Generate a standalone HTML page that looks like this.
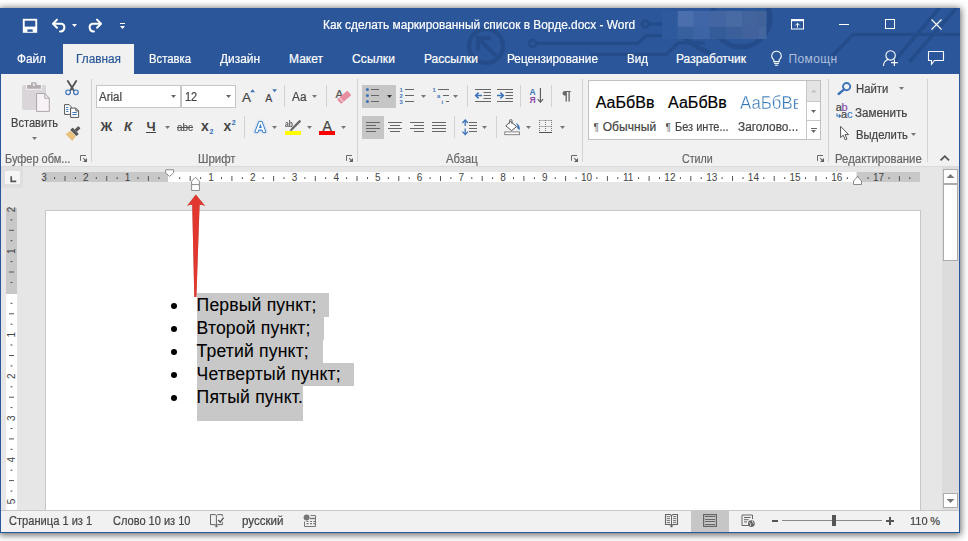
<!DOCTYPE html>
<html lang="ru"><head><meta charset="utf-8"><title>Word</title>
<style>
html,body{margin:0;padding:0;background:#fff;}
body{width:968px;height:541px;overflow:hidden;position:relative;font-family:"Liberation Sans",sans-serif;}
.b{position:absolute;display:block;}
.t{position:absolute;white-space:nowrap;line-height:20px;font-family:"Liberation Sans",sans-serif;-webkit-text-stroke:0.2px currentColor;}
</style></head><body>
<div class="b" style="left:0;top:8px;width:960px;height:525px;background:#2b579a;box-shadow:0 1px 7px 1px rgba(0,0,0,.6);"></div>
<div class="b" style="left:0px;top:8px;width:960px;height:66px;background:#2b579a;"></div>
<div class="b" style="left:1px;top:74px;width:958px;height:92px;background:#f1f1f1;"></div>
<div class="b" style="left:1px;top:166px;width:958px;height:1px;background:#dadada;"></div>
<div class="b" style="left:1px;top:167px;width:958px;height:344px;background:#e6e6e6;"></div>
<div class="b" style="left:1px;top:511px;width:958px;height:20.5px;background:#f1f1f1;"></div>
<div class="b" style="left:1px;top:510px;width:958px;height:1px;background:#c8c8c8;"></div>
<div class="b" style="left:63px;top:44px;width:71px;height:31px;background:#f1f1f1;"></div>
<svg class="b" style="left:0px;top:8px;" width="960" height="66" viewBox="0 8 960 66">
<g fill="none" stroke="#254c8a" stroke-width="3.5" stroke-linecap="butt">
 <circle cx="486" cy="46" r="17" stroke-width="4.5"/>
 <path d="M496 56 L479 39 M478 51 V38 H491" stroke-width="4.5"/>
 <circle cx="532.7" cy="43.3" r="3.4" stroke-width="2.8"/>
 <path d="M536.2 43.3 H638 L646 35.5 H678"/>
 <path d="M590 54.5 H666 L678 43 H705"/>
 <circle cx="645.4" cy="24" r="3.4" stroke-width="2.8"/>
 <path d="M649 24 H680"/>
 <circle cx="741" cy="18" r="29" stroke-width="5"/><path d="M676 26 Q686 44 712 54" stroke-width="5"/>
 <path d="M960 34.4 H853 L831 57.5 M939.4 8 L893.6 62 M956.5 8 L909.1 62"/>
</g></svg>
<svg class="b" style="left:660px;top:10px;" width="110" height="30" viewBox="660 10 110 30"><rect x="662" y="11" width="16" height="28" fill="#2e5a9d"/><rect x="677.7" y="11" width="16.3" height="16" fill="#4a6fac"/><rect x="677.7" y="26.8" width="16.3" height="12.2" fill="#37609e"/><rect x="693.8" y="11" width="16.3" height="16" fill="#4166a7"/><rect x="693.8" y="26.8" width="16.3" height="12.2" fill="#3d65a5"/><rect x="709.9" y="11" width="16.3" height="16" fill="#4365a1"/><rect x="709.9" y="26.8" width="16.3" height="12.2" fill="#345c99"/><rect x="726.0" y="11" width="16.3" height="16" fill="#486ba3"/><rect x="726.0" y="26.8" width="16.3" height="12.2" fill="#3a5f9a"/><rect x="742.1" y="11" width="16.3" height="16" fill="#41649d"/><rect x="742.1" y="26.8" width="16.3" height="12.2" fill="#41629c"/><rect x="758.2" y="11" width="8.2" height="16" fill="#41639a"/><rect x="758.2" y="26.8" width="8.2" height="12.2" fill="#4567a0"/></svg>
<svg class="b" style="left:22px;top:18px;" width="16" height="16" viewBox="0 0 16 16"><rect x="0.8" y="0.8" width="14.4" height="14" fill="#fff"/><rect x="2.7" y="2.7" width="10.6" height="5.9" fill="#2b579a"/><rect x="5.4" y="11.4" width="5.3" height="2.4" fill="#2b579a"/></svg>
<svg class="b" style="left:51px;top:17px;" width="17" height="16" viewBox="0 0 17 16"><path d="M2.6 6.8 H10.6 A3.9 3.9 0 0 1 9 14.4" fill="none" stroke="#fff" stroke-width="2" stroke-linecap="round"/><path d="M6 2.6 L2 6.8 L6 10.8" fill="none" stroke="#fff" stroke-width="2" stroke-linecap="round" stroke-linejoin="round"/></svg>
<svg class="b" style="left:71.0px;top:22.8px;" width="7" height="5.0" viewBox="0 0 7 5.0"><path d="M1 1 H6 L3.5 4.0 Z" fill="#fff"/></svg>
<svg class="b" style="left:85.5px;top:17px;" width="17" height="16" viewBox="0 0 17 16"><path d="M14.4 6.8 H6.4 A3.9 3.9 0 0 0 8 14.4" fill="none" stroke="#fff" stroke-width="2" stroke-linecap="round"/><path d="M11 2.6 L15 6.8 L11 10.8" fill="none" stroke="#fff" stroke-width="2" stroke-linecap="round" stroke-linejoin="round"/></svg>
<div class="b" style="left:120px;top:23px;width:5px;height:1.1999999999999993px;background:#fff;"></div>
<svg class="b" style="left:119.0px;top:24.7px;" width="7" height="5.0" viewBox="0 0 7 5.0"><path d="M1 1 H6 L3.5 4.0 Z" fill="#fff"/></svg>
<span class="t " style="left:323.00px;top:15.00px;font-size:12px;color:#fff;transform:scaleX(0.9918);transform-origin:0 50%;">Как сделать маркированный список в Ворде.docx - Word</span>
<svg class="b" style="left:790px;top:18px;" width="15" height="12" viewBox="0 0 15 12"><rect x="1.5" y="1.5" width="12" height="9.5" fill="none" stroke="#fff" stroke-width="1"/><rect x="1" y="1" width="13" height="2.2" fill="#fff"/><path d="M7.5 9.6 V5.4 M5.4 7.3 L7.5 5.2 L9.6 7.3" fill="none" stroke="#fff" stroke-width="1"/></svg>
<div class="b" style="left:839px;top:24px;width:10px;height:1px;background:#fff;"></div>
<div class="b" style="left:885px;top:19px;width:10px;height:10px;border:1px solid #fff;box-sizing:border-box;"></div>
<svg class="b" style="left:931px;top:18.5px;" width="11" height="11" viewBox="0 0 11 11"><path d="M0.5 0.5 L10.5 10.5 M10.5 0.5 L0.5 10.5" stroke="#fff" stroke-width="1.1" fill="none"/></svg>
<span class="t " style="left:17.00px;top:49.00px;font-size:12px;color:#fff;transform:scaleX(0.9830);transform-origin:0 50%;">Файл</span>
<span class="t " style="left:76.00px;top:49.00px;font-size:12px;color:#2b579a;transform:scaleX(0.9853);transform-origin:0 50%;">Главная</span>
<span class="t " style="left:149.00px;top:49.00px;font-size:12px;color:#fff;transform:scaleX(0.9417);transform-origin:0 50%;">Вставка</span>
<span class="t " style="left:220.00px;top:49.00px;font-size:12px;color:#fff;transform:scaleX(0.9917);transform-origin:0 50%;">Дизайн</span>
<span class="t " style="left:289.00px;top:49.00px;font-size:12px;color:#fff;letter-spacing:0.008px;">Макет</span>
<span class="t " style="left:352.00px;top:49.00px;font-size:12px;color:#fff;letter-spacing:0.126px;">Ссылки</span>
<span class="t " style="left:424.00px;top:49.00px;font-size:12px;color:#fff;letter-spacing:0.018px;">Рассылки</span>
<span class="t " style="left:507.00px;top:49.00px;font-size:12px;color:#fff;transform:scaleX(0.9821);transform-origin:0 50%;">Рецензирование</span>
<span class="t " style="left:627.00px;top:49.00px;font-size:12px;color:#fff;transform:scaleX(0.9674);transform-origin:0 50%;">Вид</span>
<span class="t " style="left:676.00px;top:49.00px;font-size:12px;color:#fff;letter-spacing:0.002px;">Разработчик</span>
<span class="t " style="left:788.50px;top:49.00px;font-size:12px;color:#aebfdb;letter-spacing:0.380px;-webkit-text-stroke:0;">Помощн</span>
<svg class="b" style="left:770px;top:50px;" width="13" height="17" viewBox="0 0 13 17"><path d="M6.5 1.2 A4.6 4.6 0 0 1 9.2 9.6 V11.6 H3.8 V9.6 A4.6 4.6 0 0 1 6.5 1.2 Z" fill="none" stroke="#fff" stroke-width="1.1"/><path d="M4 13.4 H9 M4.8 15.2 H8.2" stroke="#fff" stroke-width="1"/></svg>
<svg class="b" style="left:881px;top:49px;" width="18" height="18" viewBox="0 0 18 18"><circle cx="9.6" cy="6.4" r="4.7" fill="none" stroke="#fff" stroke-width="1.1"/><path d="M2.4 17 C2.8 12.6 5.2 11 7.4 10.4" fill="none" stroke="#fff" stroke-width="1.1"/><path d="M13.4 10.4 V17 M10 13.7 H16.8" stroke="#fff" stroke-width="1.2"/></svg>
<svg class="b" style="left:927px;top:50px;" width="18" height="16" viewBox="0 0 18 16"><path d="M1.5 1.5 H16.5 V10.5 H7.5 L4.5 14.2 V10.5 H1.5 Z" fill="none" stroke="#fff" stroke-width="1.1" stroke-linejoin="miter"/></svg>
<svg class="b" style="left:21px;top:81px;" width="30" height="32" viewBox="0 0 30 32">
<rect x="1.1" y="3.9" width="23.9" height="25" rx="1.6" fill="#d9d5d9"/>
<rect x="5" y="3.9" width="16" height="5" fill="#f1f1f1"/>
<path d="M6 7.8 V4.1 H10 V2.2 Q10 1.2 11 1.2 H14.6 Q15.6 1.2 15.6 2.2 V4.1 H19.9 V7.8 Z" fill="#b2aeb2"/>
<rect x="11.9" y="2.6" width="2" height="2.2" fill="#f4f2f4"/>
<path d="M15.6 12.5 H23.8 L28.3 17.2 V30.4 H15.6 Z" fill="#f8f1f6" stroke="#aaa6aa" stroke-width="1" stroke-linejoin="miter"/>
<path d="M23.8 12.5 V17.2 H28.3" fill="none" stroke="#aaa6aa" stroke-width="1"/>
</svg>
<span class="t " style="left:10.70px;top:113.00px;font-size:12px;color:#444;transform:scaleX(0.9240);transform-origin:0 50%;">Вставить</span>
<svg class="b" style="left:30.9px;top:136.1px;" width="7" height="5.0" viewBox="0 0 7 5.0"><path d="M1 1 H6 L3.5 4.0 Z" fill="#777"/></svg>
<svg class="b" style="left:63px;top:79px;" width="18" height="18" viewBox="0 0 18 18">
<path d="M4.8 2 L10.6 11.2 M13.2 2 L7.4 11.2" stroke="#555" stroke-width="1.9" fill="none" stroke-linecap="round"/>
<circle cx="5.1" cy="13.3" r="2.3" fill="none" stroke="#3c74ba" stroke-width="1.2"/>
<circle cx="12.9" cy="13.3" r="2.3" fill="none" stroke="#3c74ba" stroke-width="1.2"/>
</svg>
<svg class="b" style="left:63px;top:103px;" width="18" height="16" viewBox="0 0 18 16">
<path d="M1.6 1.6 H6 L8.2 3.8 V11.4 H1.6 Z" fill="#fff" stroke="#555" stroke-width="1"/>
<path d="M3.2 4.5 H5.4 M3.2 6.5 H5.4 M3.2 8.5 H5.4" stroke="#3c74ba" stroke-width="1"/>
<path d="M7.6 5.1 H12.8 L15.6 7.9 V14.4 H7.6 Z" fill="#fff" stroke="#555" stroke-width="1"/>
<path d="M12.8 5.1 V7.9 H15.6" fill="none" stroke="#555" stroke-width="1"/>
<path d="M9.4 9.5 H13.8 M9.4 11.5 H13.8" stroke="#3c74ba" stroke-width="1"/>
</svg>
<svg class="b" style="left:63.5px;top:124.5px;" width="18" height="17" viewBox="0 0 18 17">
<g transform="rotate(45 9 8.5)">
<rect x="7.4" y="-0.5" width="3.2" height="5.2" rx="0.6" fill="#595959"/>
<rect x="4.6" y="4.6" width="8.8" height="3.4" rx="0.6" fill="#595959"/>
<path d="M5 8.5 H13 L13.8 14.2 H4.2 Z" fill="#e9c07c"/>
</g>
</svg>
<span class="t " style="left:4.60px;top:149.00px;font-size:12px;color:#666;transform:scaleX(0.9139);transform-origin:0 50%;">Буфер обм...</span>
<svg class="b" style="left:80px;top:155px;" width="8" height="8" viewBox="0 0 8 8"><path d="M0.5 5.8 V0.5 H6" fill="none" stroke="#686868" stroke-width="1"/><path d="M3.2 3.2 L5.6 5.6" stroke="#686868" stroke-width="1.1"/><path d="M7 3 V7 H3 Z" fill="#606060"/></svg>
<div class="b" style="left:91px;top:79px;width:1px;height:83px;background:#d2d2d2;"></div>
<div class="b" style="left:96px;top:85px;width:85px;height:23px;background:#fff;border:1px solid #c6c6c6;box-sizing:border-box;"></div>
<div class="b" style="left:181px;top:85px;width:55px;height:23px;background:#fff;border:1px solid #c6c6c6;box-sizing:border-box;"></div>
<span class="t " style="left:99.30px;top:87.00px;font-size:12px;color:#444;transform:scaleX(0.9581);transform-origin:0 50%;">Arial</span>
<svg class="b" style="left:170.2px;top:94.0px;" width="7" height="5.0" viewBox="0 0 7 5.0"><path d="M1 1 H6 L3.5 4.0 Z" fill="#666"/></svg>
<span class="t " style="left:184.80px;top:87.00px;font-size:12px;color:#444;transform:scaleX(0.9141);transform-origin:0 50%;">12</span>
<svg class="b" style="left:224.8px;top:94.0px;" width="7" height="5.0" viewBox="0 0 7 5.0"><path d="M1 1 H6 L3.5 4.0 Z" fill="#666"/></svg>
<span class="t " style="left:100.60px;top:117.00px;font-size:13px;color:#444;font-weight:bold;-webkit-text-stroke:0;">Ж</span>
<span class="t " style="left:124.00px;top:117.00px;font-size:13px;color:#444;font-weight:bold;-webkit-text-stroke:0;font-style:italic;">К</span>
<span class="t " style="left:146.60px;top:117.00px;font-size:13px;color:#444;font-weight:bold;-webkit-text-stroke:0;">Ч</span>
<div class="b" style="left:146px;top:132px;width:10px;height:1px;background:#444;"></div>
<svg class="b" style="left:164.0px;top:124.5px;" width="7" height="5.0" viewBox="0 0 7 5.0"><path d="M1 1 H6 L3.5 4.0 Z" fill="#777"/></svg>
<span class="t " style="left:177.20px;top:117.00px;font-size:11px;color:#555;transform:scaleX(0.9022);transform-origin:0 50%;text-decoration:line-through;">abc</span>
<span class="t " style="left:200.90px;top:116.00px;font-size:14px;color:#444;font-weight:bold;-webkit-text-stroke:0;">x</span>
<span class="t " style="left:209.60px;top:122.00px;font-size:7px;color:#2b6cb8;font-weight:bold;-webkit-text-stroke:0;">2</span>
<span class="t " style="left:223.40px;top:116.00px;font-size:14px;color:#444;font-weight:bold;-webkit-text-stroke:0;">x</span>
<span class="t " style="left:231.70px;top:113.00px;font-size:7px;color:#2b6cb8;font-weight:bold;-webkit-text-stroke:0;">2</span>
<span class="t " style="left:197.90px;top:149.00px;font-size:12px;color:#666;transform:scaleX(0.9498);transform-origin:0 50%;">Шрифт</span>
<svg class="b" style="left:346px;top:155px;" width="8" height="8" viewBox="0 0 8 8"><path d="M0.5 5.8 V0.5 H6" fill="none" stroke="#686868" stroke-width="1"/><path d="M3.2 3.2 L5.6 5.6" stroke="#686868" stroke-width="1.1"/><path d="M7 3 V7 H3 Z" fill="#606060"/></svg>
<div class="b" style="left:357px;top:79px;width:1px;height:83px;background:#d2d2d2;"></div>
<span class="t " style="left:242.00px;top:88.00px;font-size:13.5px;color:#444;">A</span>
<svg class="b" style="left:250px;top:89px;" width="6" height="4" viewBox="0 0 6 4"><path d="M0.2 3.2 L2.6 0.3 L5 3.2 Z" fill="#3c74ba"/></svg>
<span class="t " style="left:265.20px;top:88.00px;font-size:10.5px;color:#444;">A</span>
<svg class="b" style="left:272px;top:89px;" width="6" height="4" viewBox="0 0 6 4"><path d="M0.2 0.3 H5 L2.6 3.2 Z" fill="#3c74ba"/></svg>
<div class="b" style="left:284px;top:85px;width:1px;height:22px;background:#d2d2d2;"></div>
<span class="t " style="left:292.20px;top:87.00px;font-size:12.5px;color:#444;transform:scaleX(0.9462);transform-origin:0 50%;">Аа</span>
<svg class="b" style="left:311.1px;top:94.0px;" width="7" height="5.0" viewBox="0 0 7 5.0"><path d="M1 1 H6 L3.5 4.0 Z" fill="#777"/></svg>
<div class="b" style="left:326px;top:85px;width:1px;height:22px;background:#d2d2d2;"></div>
<span class="t " style="left:335.40px;top:84.00px;font-size:11.5px;color:#555;">A</span>
<svg class="b" style="left:335px;top:88px;" width="17" height="16" viewBox="0 0 17 16"><g transform="rotate(-40 9 9)"><rect x="2.2" y="6.3" width="13.6" height="6" rx="0.8" fill="#e78ea0"/><rect x="4.6" y="6.3" width="1.1" height="6" fill="#f6d3da"/></g></svg>
<div class="b" style="left:244px;top:116px;width:1px;height:22px;background:#d2d2d2;"></div>
<svg class="b" style="left:250px;top:116px;" width="20" height="20" viewBox="250 116 20 20"><text x="254.9" y="131.6" font-size="15" font-weight="bold" font-family="Liberation Sans, sans-serif" fill="#fff" stroke="#2e75c7" stroke-width="1.7" paint-order="stroke" stroke-linejoin="round" style="filter:drop-shadow(0 0 0.8px #8bb8ee);">A</text></svg>
<svg class="b" style="left:271.1px;top:124.9px;" width="7" height="5.0" viewBox="0 0 7 5.0"><path d="M1 1 H6 L3.5 4.0 Z" fill="#777"/></svg>
<span class="t " style="left:284.90px;top:114.00px;font-size:9px;color:#555;font-weight:bold;-webkit-text-stroke:0;transform:scaleX(0.7522);transform-origin:0 50%;">ab</span>
<svg class="b" style="left:284px;top:119px;" width="18" height="13" viewBox="0 0 18 13"><path d="M16.4 1.6 L8 10" stroke="#6a6a6a" stroke-width="2.4" stroke-linecap="butt"/><path d="M8.4 8.2 L5.4 11.6 L7.6 11.9 L9.8 9.6 Z" fill="#6a6a6a"/></svg>
<div class="b" style="left:285px;top:131px;width:16px;height:4px;background:#ffff00;"></div>
<svg class="b" style="left:306.0px;top:124.9px;" width="7" height="5.0" viewBox="0 0 7 5.0"><path d="M1 1 H6 L3.5 4.0 Z" fill="#777"/></svg>
<span class="t " style="left:322.40px;top:116.00px;font-size:14px;color:#444;">A</span>
<div class="b" style="left:319px;top:131px;width:16px;height:4px;background:#ff0000;"></div>
<svg class="b" style="left:339.9px;top:124.9px;" width="7" height="5.0" viewBox="0 0 7 5.0"><path d="M1 1 H6 L3.5 4.0 Z" fill="#777"/></svg>
<div class="b" style="left:362px;top:85px;width:34px;height:23px;background:#c6c6c6;"></div>
<svg class="b" style="left:362px;top:85px;" width="34" height="23" viewBox="362 85 34 23"><circle cx="367.4" cy="89.5" r="1.55" fill="#3c74ba"/><rect x="371" y="89.0" width="8" height="1" fill="#666"/><circle cx="367.4" cy="95.5" r="1.55" fill="#3c74ba"/><rect x="371" y="95.0" width="8" height="1" fill="#666"/><circle cx="367.4" cy="101.5" r="1.55" fill="#3c74ba"/><rect x="371" y="101.0" width="8" height="1" fill="#666"/></svg>
<svg class="b" style="left:386.0px;top:94.0px;" width="7" height="5.0" viewBox="0 0 7 5.0"><path d="M1 1 H6 L3.5 4.0 Z" fill="#333"/></svg>
<svg class="b" style="left:398px;top:85px;" width="18" height="23" viewBox="398 85 18 23"><text x="399.6" y="91.9" font-size="5.8" font-weight="bold" fill="#3c74ba" font-family="Liberation Sans, sans-serif">1</text><rect x="405" y="89.0" width="9" height="1" fill="#666"/><text x="399.6" y="97.9" font-size="5.8" font-weight="bold" fill="#3c74ba" font-family="Liberation Sans, sans-serif">2</text><rect x="405" y="95.0" width="9" height="1" fill="#666"/><text x="399.6" y="103.9" font-size="5.8" font-weight="bold" fill="#3c74ba" font-family="Liberation Sans, sans-serif">3</text><rect x="405" y="101.0" width="9" height="1" fill="#666"/></svg>
<svg class="b" style="left:419.8px;top:94.0px;" width="7" height="5.0" viewBox="0 0 7 5.0"><path d="M1 1 H6 L3.5 4.0 Z" fill="#777"/></svg>
<svg class="b" style="left:431px;top:85px;" width="20" height="23" viewBox="431 85 20 23"><text x="432.6" y="91.9" font-size="5.8" font-weight="bold" fill="#3c74ba" font-family="Liberation Sans, sans-serif">1</text><rect x="438" y="89" width="11" height="1" fill="#666"/><text x="437" y="97.6" font-size="5.8" font-weight="bold" fill="#3c74ba" font-family="Liberation Sans, sans-serif">a</text><rect x="443" y="95" width="6" height="1" fill="#666"/><text x="441.6" y="103.9" font-size="5.8" font-weight="bold" fill="#3c74ba" font-family="Liberation Sans, sans-serif">i</text><rect x="446" y="101" width="3" height="1" fill="#666"/></svg>
<svg class="b" style="left:452.0px;top:94.0px;" width="7" height="5.0" viewBox="0 0 7 5.0"><path d="M1 1 H6 L3.5 4.0 Z" fill="#777"/></svg>
<div class="b" style="left:467px;top:85px;width:1px;height:22px;background:#d2d2d2;"></div>
<svg class="b" style="left:474px;top:87px;" width="19" height="17" viewBox="474 87 19 17"><rect x="475" y="89" width="16" height="1" fill="#666"/><rect x="475" y="101" width="16" height="1" fill="#666"/><rect x="483.5" y="92" width="7.5" height="1" fill="#666"/><rect x="483.5" y="95" width="7.5" height="1" fill="#666"/><rect x="483.5" y="98" width="7.5" height="1" fill="#666"/><path d="M482 95.5 H476 M478.6 92.6 L475.6 95.5 L478.6 98.4" fill="none" stroke="#3c74ba" stroke-width="1.5"/></svg>
<svg class="b" style="left:496px;top:87px;" width="19" height="17" viewBox="496 87 19 17"><rect x="497" y="89" width="16" height="1" fill="#666"/><rect x="497" y="101" width="16" height="1" fill="#666"/><rect x="505.5" y="92" width="7.5" height="1" fill="#666"/><rect x="505.5" y="95" width="7.5" height="1" fill="#666"/><rect x="505.5" y="98" width="7.5" height="1" fill="#666"/><path d="M497 95.5 H503 M500.4 92.6 L503.4 95.5 L500.4 98.4" fill="none" stroke="#3c74ba" stroke-width="1.5"/></svg>
<div class="b" style="left:520px;top:85px;width:1px;height:22px;background:#d2d2d2;"></div>
<span class="t " style="left:529.60px;top:82.00px;font-size:8.5px;color:#3c74ba;font-weight:bold;-webkit-text-stroke:0;">А</span>
<span class="t " style="left:529.60px;top:90.00px;font-size:8.5px;color:#8a4aa8;font-weight:bold;-webkit-text-stroke:0;">Я</span>
<svg class="b" style="left:536px;top:87px;" width="9" height="17" viewBox="0 0 9 17"><path d="M4.4 1 V15 M1.6 12 L4.4 15.2 L7.2 12" fill="none" stroke="#555" stroke-width="1.1"/></svg>
<div class="b" style="left:551px;top:85px;width:1px;height:22px;background:#d2d2d2;"></div>
<span class="t " style="left:561.80px;top:86.00px;font-size:13px;color:#666;font-weight:bold;-webkit-text-stroke:0;transform:scaleX(1.3);transform-origin:0 0;">¶</span>
<svg class="b" style="left:571px;top:155px;" width="8" height="8" viewBox="0 0 8 8"><path d="M0.5 5.8 V0.5 H6" fill="none" stroke="#686868" stroke-width="1"/><path d="M3.2 3.2 L5.6 5.6" stroke="#686868" stroke-width="1.1"/><path d="M7 3 V7 H3 Z" fill="#606060"/></svg>
<div class="b" style="left:582px;top:79px;width:1px;height:83px;background:#d2d2d2;"></div>
<div class="b" style="left:362px;top:116px;width:22px;height:23px;background:#c6c6c6;"></div>
<svg class="b" style="left:362px;top:116px;" width="90" height="23" viewBox="362 116 90 23"><rect x="366" y="122" width="14" height="1" fill="#666"/><rect x="366" y="125" width="10" height="1" fill="#666"/><rect x="366" y="128" width="14" height="1" fill="#666"/><rect x="366" y="131" width="10" height="1" fill="#666"/><rect x="388" y="122" width="14" height="1" fill="#666"/><rect x="390" y="125" width="10" height="1" fill="#666"/><rect x="388" y="128" width="14" height="1" fill="#666"/><rect x="390" y="131" width="10" height="1" fill="#666"/><rect x="410" y="122" width="14" height="1" fill="#666"/><rect x="414" y="125" width="10" height="1" fill="#666"/><rect x="410" y="128" width="14" height="1" fill="#666"/><rect x="414" y="131" width="10" height="1" fill="#666"/><rect x="432" y="122" width="14" height="1" fill="#666"/><rect x="432" y="125" width="14" height="1" fill="#666"/><rect x="432" y="128" width="14" height="1" fill="#666"/><rect x="432" y="131" width="14" height="1" fill="#666"/></svg>
<div class="b" style="left:454px;top:116px;width:1px;height:22px;background:#d2d2d2;"></div>
<svg class="b" style="left:461px;top:118px;" width="17" height="18" viewBox="461 118 17 18"><path d="M465.2 120.2 V126 M465.2 128.6 V134.4 M462.4 123 L465.2 120 L468 123 M462.4 131.6 L465.2 134.6 L468 131.6" fill="none" stroke="#3c74ba" stroke-width="1.3"/><rect x="469" y="122" width="8" height="1" fill="#666"/><rect x="469" y="125" width="8" height="1" fill="#666"/><rect x="469" y="128" width="8" height="1" fill="#666"/><rect x="469" y="131" width="8" height="1" fill="#666"/></svg>
<svg class="b" style="left:481.0px;top:124.9px;" width="7" height="5.0" viewBox="0 0 7 5.0"><path d="M1 1 H6 L3.5 4.0 Z" fill="#777"/></svg>
<div class="b" style="left:496px;top:116px;width:1px;height:22px;background:#d2d2d2;"></div>
<svg class="b" style="left:503px;top:118px;" width="18" height="18" viewBox="503 118 18 18"><rect x="504.8" y="131.9" width="14.6" height="2.8" fill="#fff" stroke="#777" stroke-width="0.9"/><path d="M510.6 121.4 L516.6 126.6 L511.6 130.6 L505.8 125.8 Z" fill="#fff" stroke="#555" stroke-width="1"/><path d="M509.6 123.6 V120.6 Q509.6 119.6 510.8 119.6 Q512 119.6 512 120.6 V124" fill="none" stroke="#555" stroke-width="0.9"/><path d="M515.6 123.2 Q520.4 124.4 519.8 130 Q516.2 128.6 517.4 125.4 Z" fill="#3c74ba"/></svg>
<svg class="b" style="left:525.0px;top:124.9px;" width="7" height="5.0" viewBox="0 0 7 5.0"><path d="M1 1 H6 L3.5 4.0 Z" fill="#777"/></svg>
<svg class="b" style="left:538px;top:119px;" width="15" height="15" viewBox="538 119 15 15"><path d="M539.5 120.5 H552" stroke="#777" stroke-width="1" stroke-dasharray="1 1"/><path d="M539.5 126.5 H552" stroke="#777" stroke-width="1" stroke-dasharray="1 1"/><path d="M539.5 120 V132" stroke="#777" stroke-width="1" stroke-dasharray="1 1"/><path d="M545.5 120 V132" stroke="#777" stroke-width="1" stroke-dasharray="1 1"/><path d="M551.5 120 V132" stroke="#777" stroke-width="1" stroke-dasharray="1 1"/><rect x="539" y="132" width="13" height="1" fill="#555"/></svg>
<svg class="b" style="left:559.0px;top:124.9px;" width="7" height="5.0" viewBox="0 0 7 5.0"><path d="M1 1 H6 L3.5 4.0 Z" fill="#777"/></svg>
<span class="t " style="left:445.80px;top:149.00px;font-size:12px;color:#666;transform:scaleX(0.9387);transform-origin:0 50%;">Абзац</span>
<div class="b" style="left:588px;top:80px;width:233px;height:60px;background:#fff;border:1px solid #c0c0c0;box-sizing:border-box;"></div>
<div class="b" style="left:807px;top:81px;width:13px;height:20px;background:#e4e4e4;"></div>
<div class="b" style="left:806px;top:81px;width:1px;height:58px;background:#c6c6c6;"></div>
<div class="b" style="left:807px;top:101px;width:13px;height:1px;background:#c6c6c6;"></div>
<div class="b" style="left:807px;top:120px;width:13px;height:1px;background:#c6c6c6;"></div>
<svg class="b" style="left:810px;top:88px;" width="8" height="6" viewBox="0 0 8 6"><path d="M1 4.5 L3.8 1.5 L6.6 4.5 Z" fill="#c2c2c2"/></svg>
<svg class="b" style="left:810.1px;top:108.5px;" width="7" height="5.0" viewBox="0 0 7 5.0"><path d="M1 1 H6 L3.5 4.0 Z" fill="#666"/></svg>
<div class="b" style="left:811px;top:127.5px;width:6px;height:1.0px;background:#666;"></div>
<svg class="b" style="left:810.3px;top:129.1px;" width="7" height="5.0" viewBox="0 0 7 5.0"><path d="M1 1 H6 L3.5 4.0 Z" fill="#666"/></svg>
<span class="t " style="left:595.70px;top:93.00px;font-size:16px;color:#000;letter-spacing:0.052px;">АаБбВв</span>
<span class="t " style="left:668.00px;top:93.00px;font-size:16px;color:#000;letter-spacing:0.052px;">АаБбВв</span>
<div class="b" style="left:736px;top:84px;width:61.9px;height:30px;overflow:hidden;">
<span class="t " style="left:3.60px;top:9.00px;font-size:18px;color:#2e74b5;transform:scaleX(0.9361);transform-origin:0 50%;-webkit-text-stroke:0.4px #fff;">АаБбВв</span>
</div>
<span class="t " style="left:593.40px;top:118.00px;font-size:10px;color:#555;-webkit-text-stroke:0;">¶</span>
<span class="t " style="left:602.70px;top:117.00px;font-size:12px;color:#444;letter-spacing:0.066px;">Обычный</span>
<span class="t " style="left:665.40px;top:118.00px;font-size:10px;color:#555;-webkit-text-stroke:0;">¶</span>
<span class="t " style="left:674.80px;top:117.00px;font-size:12px;color:#444;transform:scaleX(0.9165);transform-origin:0 50%;">Без инте...</span>
<span class="t " style="left:738.20px;top:117.00px;font-size:12px;color:#444;transform:scaleX(0.9842);transform-origin:0 50%;">Заголово...</span>
<span class="t " style="left:681.60px;top:149.00px;font-size:12px;color:#666;transform:scaleX(0.8910);transform-origin:0 50%;">Стили</span>
<svg class="b" style="left:816.5px;top:155px;" width="8" height="8" viewBox="0 0 8 8"><path d="M0.5 5.8 V0.5 H6" fill="none" stroke="#686868" stroke-width="1"/><path d="M3.2 3.2 L5.6 5.6" stroke="#686868" stroke-width="1.1"/><path d="M7 3 V7 H3 Z" fill="#606060"/></svg>
<div class="b" style="left:828px;top:79px;width:1px;height:83px;background:#d2d2d2;"></div>
<svg class="b" style="left:836px;top:81px;" width="16" height="15" viewBox="0 0 16 15"><circle cx="10.6" cy="5.6" r="3.6" fill="none" stroke="#3c74ba" stroke-width="1.9"/><path d="M7.8 8.6 L2.6 13" stroke="#3c74ba" stroke-width="2.4" stroke-linecap="round"/></svg>
<span class="t " style="left:856.10px;top:79.00px;font-size:12px;color:#444;transform:scaleX(0.9433);transform-origin:0 50%;">Найти</span>
<svg class="b" style="left:898.0px;top:85.9px;" width="7" height="5.0" viewBox="0 0 7 5.0"><path d="M1 1 H6 L3.5 4.0 Z" fill="#777"/></svg>
<span class="t " style="left:835.70px;top:97.00px;font-size:11px;color:#444;">a</span>
<span class="t " style="left:841.60px;top:97.00px;font-size:11px;color:#8a4aa8;">b</span>
<span class="t " style="left:840.90px;top:104.00px;font-size:11px;color:#444;">a</span>
<span class="t " style="left:846.90px;top:104.00px;font-size:11px;color:#3c74ba;">c</span>
<svg class="b" style="left:835.5px;top:112.6px;" width="6" height="6" viewBox="0 0 6 6"><path d="M1 0.4 V3 H4.4 M3 1.4 L4.6 3 L3 4.6" fill="none" stroke="#3c74ba" stroke-width="1.1"/></svg>
<span class="t " style="left:855.20px;top:103.00px;font-size:12px;color:#444;transform:scaleX(0.9718);transform-origin:0 50%;">Заменить</span>
<svg class="b" style="left:839px;top:125px;" width="12" height="17" viewBox="0 0 12 17"><path d="M1.6 1.4 V12.6 L4.2 10.2 L6.2 14.8 L8 14 L6 9.6 H9.6 Z" fill="#fff" stroke="#555" stroke-width="1" stroke-linejoin="miter"/></svg>
<span class="t " style="left:855.70px;top:125.00px;font-size:12px;color:#444;transform:scaleX(0.9375);transform-origin:0 50%;">Выделить</span>
<svg class="b" style="left:910.1px;top:132.3px;" width="7" height="5.0" viewBox="0 0 7 5.0"><path d="M1 1 H6 L3.5 4.0 Z" fill="#777"/></svg>
<span class="t " style="left:834.80px;top:149.00px;font-size:12px;color:#666;transform:scaleX(0.9496);transform-origin:0 50%;">Редактирование</span>
<div class="b" style="left:927px;top:79px;width:1px;height:83px;background:#d2d2d2;"></div>
<svg class="b" style="left:939px;top:154px;" width="12" height="8" viewBox="0 0 12 8"><path d="M1.6 6.4 L5.8 2.2 L10 6.4" fill="none" stroke="#555" stroke-width="1.8"/></svg>
<div class="b" style="left:1px;top:167px;width:22px;height:21px;background:#dfdfdf;"></div>
<div class="b" style="left:5px;top:171px;width:15px;height:13px;background:#f5f5f5;"></div>
<svg class="b" style="left:10px;top:175.5px;" width="7" height="7" viewBox="0 0 7 7"><path d="M1.2 0.2 V5.4 H6.2" fill="none" stroke="#555" stroke-width="1.7"/></svg>
<div class="b" style="left:43px;top:172px;width:125px;height:10px;background:#c8c8c8;"></div>
<div class="b" style="left:168px;top:172px;width:687.5px;height:10px;background:#fff;"></div>
<div class="b" style="left:857px;top:172px;width:63px;height:10px;background:#c8c8c8;"></div>
<svg class="b" style="left:40px;top:170px;" width="882" height="14" viewBox="40 170 882 14"><text x="44.1" y="180.8" text-anchor="middle" font-size="10" fill="#444" font-family="Liberation Sans, sans-serif">3</text><rect x="54.1" y="177.2" width="1" height="1.8" fill="#444"/><rect x="64.5" y="176" width="1" height="5" fill="#555"/><rect x="74.9" y="177.2" width="1" height="1.8" fill="#444"/><text x="85.9" y="180.8" text-anchor="middle" font-size="10" fill="#444" font-family="Liberation Sans, sans-serif">2</text><rect x="95.8" y="177.2" width="1" height="1.8" fill="#444"/><rect x="106.2" y="176" width="1" height="5" fill="#555"/><rect x="116.7" y="177.2" width="1" height="1.8" fill="#444"/><text x="127.6" y="180.8" text-anchor="middle" font-size="10" fill="#444" font-family="Liberation Sans, sans-serif">1</text><rect x="137.5" y="177.2" width="1" height="1.8" fill="#444"/><rect x="147.9" y="176" width="1" height="5" fill="#555"/><rect x="158.4" y="177.2" width="1" height="1.8" fill="#444"/><rect x="179.2" y="177.2" width="1" height="1.8" fill="#444"/><rect x="189.7" y="176" width="1" height="5" fill="#555"/><rect x="200.1" y="177.2" width="1" height="1.8" fill="#444"/><text x="211.0" y="180.8" text-anchor="middle" font-size="10" fill="#444" font-family="Liberation Sans, sans-serif">1</text><rect x="221.0" y="177.2" width="1" height="1.8" fill="#444"/><rect x="231.4" y="176" width="1" height="5" fill="#555"/><rect x="241.8" y="177.2" width="1" height="1.8" fill="#444"/><text x="252.7" y="180.8" text-anchor="middle" font-size="10" fill="#444" font-family="Liberation Sans, sans-serif">2</text><rect x="262.7" y="177.2" width="1" height="1.8" fill="#444"/><rect x="273.1" y="176" width="1" height="5" fill="#555"/><rect x="283.5" y="177.2" width="1" height="1.8" fill="#444"/><text x="294.5" y="180.8" text-anchor="middle" font-size="10" fill="#444" font-family="Liberation Sans, sans-serif">3</text><rect x="304.4" y="177.2" width="1" height="1.8" fill="#444"/><rect x="314.8" y="176" width="1" height="5" fill="#555"/><rect x="325.2" y="177.2" width="1" height="1.8" fill="#444"/><text x="336.2" y="180.8" text-anchor="middle" font-size="10" fill="#444" font-family="Liberation Sans, sans-serif">4</text><rect x="346.1" y="177.2" width="1" height="1.8" fill="#444"/><rect x="356.5" y="176" width="1" height="5" fill="#555"/><rect x="367.0" y="177.2" width="1" height="1.8" fill="#444"/><text x="377.9" y="180.8" text-anchor="middle" font-size="10" fill="#444" font-family="Liberation Sans, sans-serif">5</text><rect x="387.8" y="177.2" width="1" height="1.8" fill="#444"/><rect x="398.3" y="176" width="1" height="5" fill="#555"/><rect x="408.7" y="177.2" width="1" height="1.8" fill="#444"/><text x="419.6" y="180.8" text-anchor="middle" font-size="10" fill="#444" font-family="Liberation Sans, sans-serif">6</text><rect x="429.6" y="177.2" width="1" height="1.8" fill="#444"/><rect x="440.0" y="176" width="1" height="5" fill="#555"/><rect x="450.4" y="177.2" width="1" height="1.8" fill="#444"/><text x="461.3" y="180.8" text-anchor="middle" font-size="10" fill="#444" font-family="Liberation Sans, sans-serif">7</text><rect x="471.3" y="177.2" width="1" height="1.8" fill="#444"/><rect x="481.7" y="176" width="1" height="5" fill="#555"/><rect x="492.1" y="177.2" width="1" height="1.8" fill="#444"/><text x="503.1" y="180.8" text-anchor="middle" font-size="10" fill="#444" font-family="Liberation Sans, sans-serif">8</text><rect x="513.0" y="177.2" width="1" height="1.8" fill="#444"/><rect x="523.4" y="176" width="1" height="5" fill="#555"/><rect x="533.9" y="177.2" width="1" height="1.8" fill="#444"/><text x="544.8" y="180.8" text-anchor="middle" font-size="10" fill="#444" font-family="Liberation Sans, sans-serif">9</text><rect x="554.7" y="177.2" width="1" height="1.8" fill="#444"/><rect x="565.1" y="176" width="1" height="5" fill="#555"/><rect x="575.6" y="177.2" width="1" height="1.8" fill="#444"/><text x="586.5" y="180.8" text-anchor="middle" font-size="10" fill="#444" font-family="Liberation Sans, sans-serif">10</text><rect x="596.4" y="177.2" width="1" height="1.8" fill="#444"/><rect x="606.9" y="176" width="1" height="5" fill="#555"/><rect x="617.3" y="177.2" width="1" height="1.8" fill="#444"/><text x="628.2" y="180.8" text-anchor="middle" font-size="10" fill="#444" font-family="Liberation Sans, sans-serif">11</text><rect x="638.1" y="177.2" width="1" height="1.8" fill="#444"/><rect x="648.6" y="176" width="1" height="5" fill="#555"/><rect x="659.0" y="177.2" width="1" height="1.8" fill="#444"/><text x="669.9" y="180.8" text-anchor="middle" font-size="10" fill="#444" font-family="Liberation Sans, sans-serif">12</text><rect x="679.9" y="177.2" width="1" height="1.8" fill="#444"/><rect x="690.3" y="176" width="1" height="5" fill="#555"/><rect x="700.7" y="177.2" width="1" height="1.8" fill="#444"/><text x="711.7" y="180.8" text-anchor="middle" font-size="10" fill="#444" font-family="Liberation Sans, sans-serif">13</text><rect x="721.6" y="177.2" width="1" height="1.8" fill="#444"/><rect x="732.0" y="176" width="1" height="5" fill="#555"/><rect x="742.5" y="177.2" width="1" height="1.8" fill="#444"/><text x="753.4" y="180.8" text-anchor="middle" font-size="10" fill="#444" font-family="Liberation Sans, sans-serif">14</text><rect x="763.3" y="177.2" width="1" height="1.8" fill="#444"/><rect x="773.7" y="176" width="1" height="5" fill="#555"/><rect x="784.2" y="177.2" width="1" height="1.8" fill="#444"/><text x="795.1" y="180.8" text-anchor="middle" font-size="10" fill="#444" font-family="Liberation Sans, sans-serif">15</text><rect x="805.0" y="177.2" width="1" height="1.8" fill="#444"/><rect x="815.5" y="176" width="1" height="5" fill="#555"/><rect x="825.9" y="177.2" width="1" height="1.8" fill="#444"/><text x="836.8" y="180.8" text-anchor="middle" font-size="10" fill="#444" font-family="Liberation Sans, sans-serif">16</text><rect x="846.8" y="177.2" width="1" height="1.8" fill="#444"/><rect x="857.2" y="176" width="1" height="5" fill="#555"/><rect x="867.6" y="177.2" width="1" height="1.8" fill="#444"/><text x="878.5" y="180.8" text-anchor="middle" font-size="10" fill="#444" font-family="Liberation Sans, sans-serif">17</text><rect x="888.5" y="177.2" width="1" height="1.8" fill="#444"/><rect x="898.9" y="176" width="1" height="5" fill="#555"/><rect x="909.3" y="177.2" width="1" height="1.8" fill="#444"/></svg>
<svg class="b" style="left:164px;top:168px;" width="12" height="10" viewBox="0 0 12 10"><path d="M1.6 1.8 H9.6 V4.8 L5.6 8.4 L1.6 4.8 Z" fill="#fff" stroke="#8a8a8a" stroke-width="1"/></svg>
<svg class="b" style="left:190px;top:176px;" width="12" height="16" viewBox="0 0 12 16"><path d="M1.6 5.2 L5.5 1.2 L9.4 5.2 V14.5 H1.6 Z" fill="#fff" stroke="#8a8a8a" stroke-width="1"/><path d="M1.6 8.6 H9.4" stroke="#8a8a8a" stroke-width="1"/></svg>
<svg class="b" style="left:852px;top:175px;" width="12" height="11" viewBox="0 0 12 11"><path d="M1.5 6 L5.5 1.6 L9.5 6 V9.5 H1.5 Z" fill="#fff" stroke="#8a8a8a" stroke-width="1"/></svg>
<div class="b" style="left:6px;top:208px;width:11px;height:86px;background:#c8c8c8;"></div>
<div class="b" style="left:6px;top:294px;width:11px;height:216px;background:#fff;"></div>
<svg class="b" style="left:4px;top:200px;" width="16" height="310" viewBox="4 200 16 310"><text transform="translate(15.2 209.5) rotate(-90)" text-anchor="middle" font-size="10" fill="#444" font-family="Liberation Sans, sans-serif">2</text><rect x="10.6" y="219.4" width="1.8" height="1" fill="#444"/><rect x="9" y="229.8" width="5" height="1" fill="#555"/><rect x="10.6" y="240.2" width="1.8" height="1" fill="#444"/><text transform="translate(15.2 251.2) rotate(-90)" text-anchor="middle" font-size="10" fill="#444" font-family="Liberation Sans, sans-serif">1</text><rect x="10.6" y="261.1" width="1.8" height="1" fill="#444"/><rect x="9" y="271.5" width="5" height="1" fill="#555"/><rect x="10.6" y="282.0" width="1.8" height="1" fill="#444"/><rect x="10.6" y="302.8" width="1.8" height="1" fill="#444"/><rect x="9" y="313.3" width="5" height="1" fill="#555"/><rect x="10.6" y="323.7" width="1.8" height="1" fill="#444"/><text transform="translate(15.2 334.6) rotate(-90)" text-anchor="middle" font-size="10" fill="#444" font-family="Liberation Sans, sans-serif">1</text><rect x="10.6" y="344.5" width="1.8" height="1" fill="#444"/><rect x="9" y="355.0" width="5" height="1" fill="#555"/><rect x="10.6" y="365.4" width="1.8" height="1" fill="#444"/><text transform="translate(15.2 376.3) rotate(-90)" text-anchor="middle" font-size="10" fill="#444" font-family="Liberation Sans, sans-serif">2</text><rect x="10.6" y="386.3" width="1.8" height="1" fill="#444"/><rect x="9" y="396.7" width="5" height="1" fill="#555"/><rect x="10.6" y="407.1" width="1.8" height="1" fill="#444"/><text transform="translate(15.2 418.1) rotate(-90)" text-anchor="middle" font-size="10" fill="#444" font-family="Liberation Sans, sans-serif">3</text><rect x="10.6" y="428.0" width="1.8" height="1" fill="#444"/><rect x="9" y="438.4" width="5" height="1" fill="#555"/><rect x="10.6" y="448.8" width="1.8" height="1" fill="#444"/><text transform="translate(15.2 459.8) rotate(-90)" text-anchor="middle" font-size="10" fill="#444" font-family="Liberation Sans, sans-serif">4</text><rect x="10.6" y="469.7" width="1.8" height="1" fill="#444"/><rect x="9" y="480.1" width="5" height="1" fill="#555"/><rect x="10.6" y="490.6" width="1.8" height="1" fill="#444"/><text transform="translate(15.2 501.5) rotate(-90)" text-anchor="middle" font-size="10" fill="#444" font-family="Liberation Sans, sans-serif">5</text></svg>
<div class="b" style="left:45px;top:210px;width:876px;height:300px;background:#fff;border:1px solid #c6c6c6;box-sizing:border-box;border-bottom:none;"></div>
<div class="b" style="left:197px;top:293px;width:132px;height:24px;background:#c8c8c8;"></div>
<div class="b" style="left:197px;top:317px;width:127px;height:23px;background:#c8c8c8;"></div>
<div class="b" style="left:197px;top:340px;width:126px;height:23px;background:#c8c8c8;"></div>
<div class="b" style="left:197px;top:363px;width:157px;height:23px;background:#c8c8c8;"></div>
<div class="b" style="left:197px;top:386px;width:106px;height:35px;background:#c8c8c8;"></div>
<span class="t " style="left:196.60px;top:295.00px;font-size:17.6px;color:#000;letter-spacing:0.16px;-webkit-text-stroke:0.08px #000;">Первый пункт;</span>
<div class="b" style="left:170.7px;top:302.6px;width:6.7px;height:6.7px;border-radius:50%;background:#000;"></div>
<span class="t " style="left:196.60px;top:318.00px;font-size:17.6px;color:#000;letter-spacing:0.16px;-webkit-text-stroke:0.08px #000;">Второй пункт;</span>
<div class="b" style="left:170.7px;top:325.7px;width:6.7px;height:6.7px;border-radius:50%;background:#000;"></div>
<span class="t " style="left:196.60px;top:341.00px;font-size:17.6px;color:#000;letter-spacing:0.16px;-webkit-text-stroke:0.08px #000;">Третий пункт;</span>
<div class="b" style="left:170.7px;top:348.7px;width:6.7px;height:6.7px;border-radius:50%;background:#000;"></div>
<span class="t " style="left:196.60px;top:364.00px;font-size:17.6px;color:#000;letter-spacing:0.16px;-webkit-text-stroke:0.08px #000;">Четвертый пункт;</span>
<div class="b" style="left:170.7px;top:371.8px;width:6.7px;height:6.7px;border-radius:50%;background:#000;"></div>
<span class="t " style="left:196.60px;top:387.00px;font-size:17.6px;color:#000;letter-spacing:0.16px;-webkit-text-stroke:0.08px #000;">Пятый пункт.</span>
<div class="b" style="left:170.7px;top:394.8px;width:6.7px;height:6.7px;border-radius:50%;background:#000;"></div>
<svg class="b" style="left:184px;top:192px;" width="26" height="108" viewBox="184 192 26 108"><path d="M195.8 194.4 L205.2 206 Q202 204.6 199.6 204.8 L196.4 296.9 L194.3 296.9 L192.2 204.8 Q189.8 204.6 187 206 Z" fill="#e2372e" style="filter:drop-shadow(0.6px 0.8px 0.6px rgba(0,0,0,.35));"/></svg>
<div class="b" style="left:942px;top:167px;width:17px;height:343px;background:#dcdcdc;"></div>
<div class="b" style="left:943px;top:169px;width:15px;height:15px;background:#fff;border:1px solid #ababab;box-sizing:border-box;"></div>
<svg class="b" style="left:946px;top:173px;" width="9" height="6" viewBox="0 0 9 6"><path d="M0.6 5 L4.5 1 L8.4 5 Z" fill="#777"/></svg>
<div class="b" style="left:943px;top:184px;width:15px;height:77px;background:#fff;border:1px solid #ababab;box-sizing:border-box;"></div>
<div class="b" style="left:943px;top:493px;width:15px;height:15px;background:#fff;border:1px solid #ababab;box-sizing:border-box;"></div>
<svg class="b" style="left:946px;top:498px;" width="9" height="6" viewBox="0 0 9 6"><path d="M0.6 1 H8.4 L4.5 5 Z" fill="#777"/></svg>
<span class="t " style="left:8.80px;top:511.00px;font-size:12px;color:#444;transform:scaleX(0.9251);transform-origin:0 50%;">Страница 1 из 1</span>
<span class="t " style="left:112.50px;top:511.00px;font-size:12px;color:#444;transform:scaleX(0.9195);transform-origin:0 50%;">Слово 10 из 10</span>
<span class="t " style="left:241.50px;top:511.00px;font-size:12px;color:#444;transform:scaleX(0.9638);transform-origin:0 50%;">русский</span>
<svg class="b" style="left:209px;top:513px;" width="16" height="15" viewBox="0 0 16 15"><path d="M7.4 2.6 L6.2 1.6 H1.5 V11.6 H6.2 L7.4 12.6 L8.6 11.6 H13.4 V9.2 M7.4 2.6 L8.6 1.6 H13.4 V3.4 M7.4 2.6 V14 M6 12.6 L7.4 14.2 L8.8 12.6" fill="none" stroke="#666" stroke-width="1"/><path d="M9.2 7 L11.2 9.2 L14.6 4.6" fill="none" stroke="#555" stroke-width="1.3"/></svg>
<svg class="b" style="left:303px;top:514px;" width="14" height="14" viewBox="0 0 14 14"><circle cx="3.6" cy="3.4" r="3" fill="#777"/><path d="M7.5 1.5 H12.5 V12.5 H1.5 V7.5" fill="none" stroke="#777" stroke-width="1"/><path d="M7 4.5 H12.5" stroke="#777" stroke-width="1.4"/><path d="M3.5 7.5 H5.5 M7 7.5 H9 M10.2 7.5 H12 M3.5 9.7 H5.5 M7 9.7 H9 M10.2 9.7 H12" stroke="#777" stroke-width="1.2"/></svg>
<div class="b" style="left:691px;top:511px;width:38px;height:20.5px;background:#c6c6c6;"></div>
<svg class="b" style="left:664px;top:513px;" width="16" height="15" viewBox="0 0 16 15"><path d="M7.5 2.6 L6.2 1.5 H1.5 V11.5 H6.2 L7.5 12.6 L8.8 11.5 H13.5 V1.5 H8.8 Z" fill="none" stroke="#666" stroke-width="1.1" stroke-linejoin="miter"/><path d="M7.5 2.6 V14 M6 12.6 L7.5 14.2 L9 12.6" fill="none" stroke="#666" stroke-width="1"/><path d="M2.8 3.6 H6 M2.8 5.6 H6 M2.8 7.6 H6 M2.8 9.6 H6 M9 3.6 H12.2 M9 5.6 H12.2 M9 7.6 H12.2 M9 9.6 H12.2" stroke="#666" stroke-width="0.9"/></svg>
<svg class="b" style="left:702px;top:513px;" width="16" height="15" viewBox="0 0 16 15"><rect x="1.6" y="1.6" width="12.8" height="11.8" fill="none" stroke="#666" stroke-width="1.2"/><path d="M3.4 3.9 H12.6 M3.4 6.3 H12.6 M3.4 8.7 H12.6 M3.4 11.1 H12.6" stroke="#666" stroke-width="1" shape-rendering="crispEdges"/></svg>
<svg class="b" style="left:741px;top:514px;" width="15" height="14" viewBox="0 0 15 14"><path d="M8 11.5 H1 V1 H11.5 V5" fill="none" stroke="#666" stroke-width="1"/><path d="M3 3.5 H9.6 M3 5.7 H7.6 M3 7.9 H6" stroke="#666" stroke-width="1"/><circle cx="10.4" cy="9.6" r="3.4" fill="#666"/><path d="M8.4 8.4 Q10.4 9.8 9.4 12 M11.4 6.8 Q10.8 8.8 13.2 9.4" fill="none" stroke="#f1f1f1" stroke-width="0.8"/></svg>
<div class="b" style="left:772px;top:520px;width:6px;height:2px;background:#555;"></div>
<div class="b" style="left:782px;top:520.4px;width:100px;height:1.0px;background:#8a8a8a;"></div>
<div class="b" style="left:832px;top:515px;width:4px;height:11px;background:#555;"></div>
<div class="b" style="left:886px;top:520px;width:8px;height:2px;background:#555;"></div>
<div class="b" style="left:889px;top:517px;width:2px;height:8px;background:#555;"></div>
<span class="t " style="left:909.80px;top:511.00px;font-size:11.5px;color:#444;transform:scaleX(0.9601);transform-origin:0 50%;">110</span>
<span class="t " style="left:930.20px;top:511.00px;font-size:11px;color:#444;">%</span>
</body></html>
